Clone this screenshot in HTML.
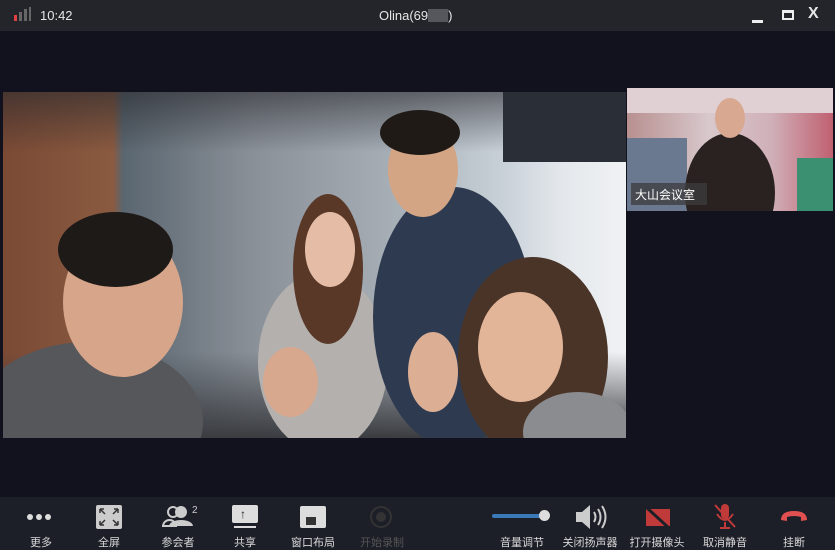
<!DOCTYPE html>
<html><head><meta charset="utf-8"><style>
*{margin:0;padding:0;box-sizing:border-box}
body{width:835px;height:550px;background:#12121f;overflow:hidden;position:relative;font-family:"Liberation Sans","Noto Sans CJK SC",sans-serif}
.a{position:absolute}
.title{left:0;top:0;width:835px;height:31px;background:#23252b;color:#e6e6e6;font-size:13px}
.tb{left:0;top:497px;width:835px;height:53px;background:#1d1f28}
.lbl{position:absolute;top:37px;font-size:11px;color:#d8d8d8;transform:translateX(-50%);white-space:nowrap}
.b{border-radius:50%}
</style></head><body>
<div class="a title">
 <div class="a" style="left:14px;top:15px;width:3px;height:6px;background:#e04040"></div>
 <div class="a" style="left:19px;top:12px;width:3px;height:9px;background:#666"></div>
 <div class="a" style="left:24px;top:9px;width:3px;height:12px;background:#666"></div>
 <div class="a" style="left:29px;top:7px;width:2px;height:14px;background:#666"></div>
 <div class="a" style="left:40px;top:8px">10:42</div>
 <div class="a" style="left:379px;top:8px">Olina(69<span style="display:inline-block;width:20px;height:13px;background:#55575c;vertical-align:-2px"></span>)</div>
 <div class="a" style="left:752px;top:20px;width:11px;height:3px;background:#eee"></div>
 <div class="a" style="left:782px;top:10px;width:12px;height:10px;border:2px solid #eee;border-top-width:3px"></div>
 <div class="a" style="left:808px;top:5px;font-size:16px;font-weight:bold">X</div>
</div>

<div class="a" style="left:3px;top:92px;width:623px;height:346px;overflow:hidden;background:linear-gradient(90deg,#7a4a35 0,#8a5a40 110px,#5a6670 120px,#8a9098 250px,#a8b0b8 400px,#c8d0d8 500px,#e4e8ec 560px,#f0f2f4 623px)">
 <div class="a" style="left:0;top:0;width:623px;height:60px;background:linear-gradient(180deg,rgba(40,40,45,.6),rgba(0,0,0,0))"></div>
 <div class="a" style="left:500px;top:0;width:123px;height:70px;background:#2a2e36"></div>
 <div class="a" style="left:0;top:260px;width:623px;height:86px;background:linear-gradient(180deg,rgba(60,60,65,0),#3a3c40)"></div>
 <div class="a b" style="left:-30px;top:250px;width:230px;height:160px;background:#55575a"></div>
 <div class="a b" style="left:60px;top:135px;width:120px;height:150px;background:#d6a58a"></div>
 <div class="a b" style="left:55px;top:120px;width:115px;height:75px;background:#1e1a18"></div>
 <div class="a b" style="left:255px;top:180px;width:130px;height:180px;background:#b4b0ae"></div>
 <div class="a b" style="left:290px;top:102px;width:70px;height:150px;background:#5a3828"></div>
 <div class="a b" style="left:302px;top:120px;width:50px;height:75px;background:#e5bda6"></div>
 <div class="a b" style="left:370px;top:95px;width:160px;height:260px;background:#2e3a50"></div>
 <div class="a b" style="left:385px;top:30px;width:70px;height:95px;background:#d4a585"></div>
 <div class="a b" style="left:377px;top:18px;width:80px;height:45px;background:#201a16"></div>
 <div class="a b" style="left:455px;top:165px;width:150px;height:200px;background:#4a3428"></div>
 <div class="a b" style="left:475px;top:200px;width:85px;height:110px;background:#e2b598"></div>
 <div class="a b" style="left:520px;top:300px;width:110px;height:80px;background:#8a8c90"></div>
 <div class="a b" style="left:260px;top:255px;width:55px;height:70px;background:#d8a88e"></div>
 <div class="a b" style="left:405px;top:240px;width:50px;height:80px;background:#dcae94"></div>
</div>

<div class="a" style="left:627px;top:88px;width:206px;height:123px;overflow:hidden;background:linear-gradient(90deg,#b89090,#d8c8cc 40%,#d0b0b8 70%,#c06070)">
 <div class="a" style="left:0;top:0;width:206px;height:25px;background:#e0d0d4"></div>
 <div class="a" style="left:0;top:50px;width:60px;height:73px;background:#6a7890"></div>
 <div class="a" style="left:170px;top:70px;width:36px;height:53px;background:#3a9070"></div>
 <div class="a b" style="left:58px;top:45px;width:90px;height:120px;background:#2a2220"></div>
 <div class="a b" style="left:88px;top:10px;width:30px;height:40px;background:#d8a890"></div>
 <div class="a" style="left:4px;top:95px;width:76px;height:22px;background:rgba(60,60,60,.75);color:#fff;font-size:12px;padding:3px 4px">大山会议室</div>
</div>

<div class="a tb">
 <div class="a" style="left:27px;top:17px;width:6px;height:6px;border-radius:50%;background:#ddd;box-shadow:9px 0 #ddd,18px 0 #ddd"></div>
 <div class="lbl" style="left:41px">更多</div>
 <svg class="a" style="left:96px;top:8px" width="26" height="24"><rect width="26" height="24" rx="2" fill="#ccc"/><path d="M4 4l5 5M4 4h4M4 4v4M22 4l-5 5M22 4h-4M22 4v4M4 20l5-5M4 20h4M4 20v-4M22 20l-5-5M22 20h-4M22 20v-4" stroke="#333" stroke-width="1.5"/></svg>
 <div class="lbl" style="left:109px">全屏</div>
 <svg class="a" style="left:161px;top:7px" width="40" height="26"><circle cx="12" cy="8" r="5" fill="none" stroke="#ccc" stroke-width="2"/><circle cx="20" cy="8" r="6" fill="#ccc"/><path d="M2 22c1-8 12-8 13 0z" fill="none" stroke="#ccc" stroke-width="2"/><path d="M8 22c1-8 23-8 24 0z" fill="#ccc"/><text x="31" y="9" font-size="10" fill="#ccc" font-family="Liberation Sans">2</text></svg>
 <div class="lbl" style="left:178px">参会者</div>
 <div class="a" style="left:232px;top:8px;width:26px;height:18px;background:#ddd;border-radius:2px"></div>
 <div class="a" style="left:234px;top:29px;width:22px;height:2px;background:#ddd"></div>
 <div class="a" style="left:240px;top:10px;font-size:12px;color:#222;font-weight:bold">↑</div>
 <div class="lbl" style="left:245px">共享</div>
 <div class="a" style="left:300px;top:9px;width:26px;height:22px;background:#ddd;border-radius:2px"></div>
 <div class="a" style="left:306px;top:20px;width:10px;height:8px;background:#333"></div>
 <div class="lbl" style="left:313px">窗口布局</div>
 <div class="a" style="left:370px;top:9px;width:22px;height:22px;border-radius:50%;border:2px solid #333;"><div style="margin:4px;width:10px;height:10px;border-radius:50%;background:#333"></div></div>
 <div class="lbl" style="left:382px;color:#555">开始录制</div>
 <div class="a" style="left:492px;top:17px;width:50px;height:4px;background:#3a7ab8;border-radius:2px"></div>
 <div class="a" style="left:539px;top:13px;width:11px;height:11px;border-radius:50%;background:#ddd"></div>
 <div class="lbl" style="left:522px">音量调节</div>
 <svg class="a" style="left:574px;top:6px" width="34" height="28"><path d="M2 9h6l8-7v24l-8-7H2z" fill="#ccc"/><path d="M20 9q3 5 0 10M24 6q5 8 0 16M28 3q7 11 0 22" stroke="#ccc" stroke-width="2" fill="none"/></svg>
 <div class="lbl" style="left:590px">关闭扬声器</div>
 <svg class="a" style="left:644px;top:8px" width="28" height="24"><rect x="2" y="4" width="24" height="17" fill="#c03a3a"/><path d="M2 2l24 22" stroke="#1d1f28" stroke-width="3"/></svg>
 <div class="lbl" style="left:657px">打开摄像头</div>
 <svg class="a" style="left:712px;top:5px" width="26" height="28"><rect x="9" y="2" width="8" height="15" rx="4" fill="#c03a3a"/><path d="M5 12q8 12 16 0M13 20v5M8 26h10" stroke="#c03a3a" stroke-width="2" fill="none"/><path d="M3 3l20 22" stroke="#c03a3a" stroke-width="2"/></svg>
 <div class="lbl" style="left:725px">取消静音</div>
 <svg class="a" style="left:779px;top:12px" width="30" height="14"><path d="M2 11q0-9 13-9t13 9l-6 1v-4q-7-2-14 0v4z" fill="#e05050"/></svg>
 <div class="lbl" style="left:794px">挂断</div>
</div>
</body></html>
